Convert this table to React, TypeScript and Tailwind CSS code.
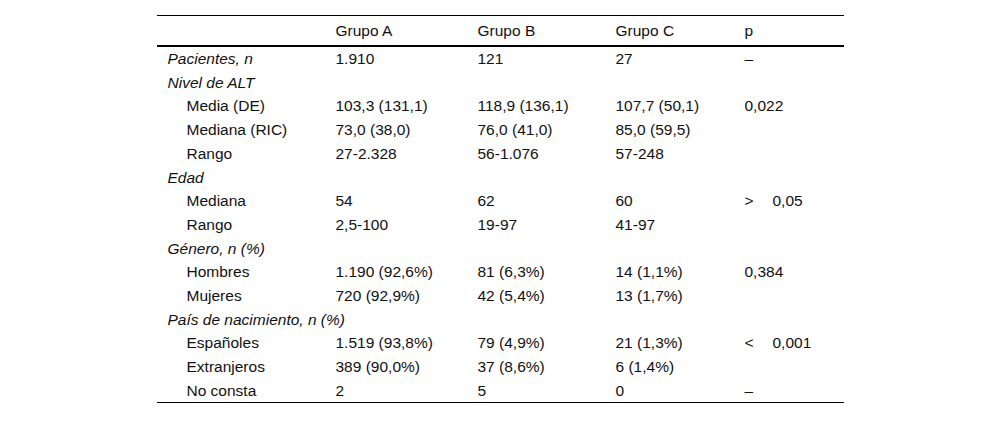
import React from "react";

type Row = {
  label: string;
  kind: "head" | "sub" | "main";
  a?: string;
  b?: string;
  c?: string;
  p?: React.ReactNode;
};

const rows: Row[] = [
  { label: "Pacientes, n", kind: "head", a: "1.910", b: "121", c: "27", p: "–" },
  { label: "Nivel de ALT", kind: "head" },
  { label: "Media (DE)", kind: "sub", a: "103,3 (131,1)", b: "118,9 (136,1)", c: "107,7 (50,1)", p: "0,022" },
  { label: "Mediana (RIC)", kind: "sub", a: "73,0 (38,0)", b: "76,0 (41,0)", c: "85,0 (59,5)" },
  { label: "Rango", kind: "sub", a: "27-2.328", b: "56-1.076", c: "57-248" },
  { label: "Edad", kind: "head" },
  {
    label: "Mediana",
    kind: "sub",
    a: "54",
    b: "62",
    c: "60",
    p: (
      <>
        <span className="inline-block w-[28px]">&gt;</span>0,05
      </>
    ),
  },
  { label: "Rango", kind: "sub", a: "2,5-100", b: "19-97", c: "41-97" },
  { label: "Género, n (%)", kind: "head" },
  { label: "Hombres", kind: "sub", a: "1.190 (92,6%)", b: "81 (6,3%)", c: "14 (1,1%)", p: "0,384" },
  { label: "Mujeres", kind: "sub", a: "720 (92,9%)", b: "42 (5,4%)", c: "13 (1,7%)" },
  { label: "País de nacimiento, n (%)", kind: "head" },
  {
    label: "Españoles",
    kind: "sub",
    a: "1.519 (93,8%)",
    b: "79 (4,9%)",
    c: "21 (1,3%)",
    p: (
      <>
        <span className="inline-block w-[28px]">&lt;</span>0,001
      </>
    ),
  },
  { label: "Extranjeros", kind: "sub", a: "389 (90,0%)", b: "37 (8,6%)", c: "6 (1,4%)" },
  { label: "No consta", kind: "sub", a: "2", b: "5", c: "0", p: "–" },
];

const cols = "grid grid-cols-[169px_142px_138px_129px_109px]";

export default function App() {
  return (
    <div
      className="w-[1000px] h-[421px] bg-white text-[#111] text-[15.5px] leading-none"
      style={{ fontFamily: '"Liberation Sans", Arial, Helvetica, sans-serif' }}
    >
      <div className="mx-auto w-[687px] pt-[15px]">
        <div className="border-t border-black">
          <div className={`${cols} h-[31px] items-center border-b-2 border-black`}>
            <div />
            <div className="pl-[10px]">Grupo A</div>
            <div className="pl-[10px]">Grupo B</div>
            <div className="pl-[10px]">Grupo C</div>
            <div className="pl-[10px]">p</div>
          </div>
          <div className="border-b border-black">
            {rows.map((r, i) => (
              <div key={i} className={`${cols} h-[23.7px] items-center`}>
                <div
                  className={
                    r.kind === "head" ? "pl-[11px] italic whitespace-nowrap" : "pl-[30px] whitespace-nowrap"
                  }
                >
                  {r.label}
                </div>
                <div className="pl-[10px] whitespace-nowrap">{r.a ?? ""}</div>
                <div className="pl-[10px] whitespace-nowrap">{r.b ?? ""}</div>
                <div className="pl-[10px] whitespace-nowrap">{r.c ?? ""}</div>
                <div className="pl-[10px] whitespace-nowrap">{r.p ?? ""}</div>
              </div>
            ))}
          </div>
        </div>
      </div>
    </div>
  );
}
